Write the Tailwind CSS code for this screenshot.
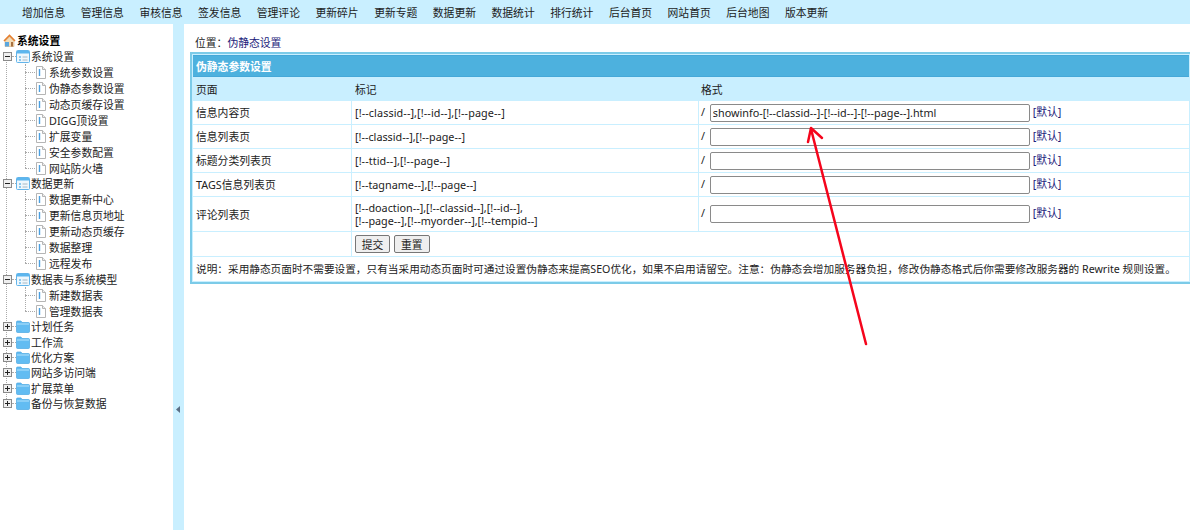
<!DOCTYPE html>
<html lang="zh-CN">
<head>
    <meta charset="UTF-8">
    <title>伪静态参数设置</title>
    <script src="https://cdn.jsdelivr.net/npm/@tailwindcss/browser@4"></script>
</head>
<body class="h-[530px] w-[1190px] overflow-hidden bg-white font-['Noto_Sans','Noto_Sans_CJK_SC',sans-serif] text-[10.8px] leading-[13px] text-[#222]">

    <!-- shared tree artwork -->
    <svg class="hidden">
        <symbol id="page" viewBox="0 0 12 13">
            <path d="M1.500.5h6l3 3v9h-9z" fill="#fff" stroke="#b5b5b5"/>
            <path d="M7.500.5v3h3" fill="#eee" stroke="#b5b5b5"/>
            <path d="M4.500 3v7" stroke="#4a9fe0" stroke-width="1.400"/>
        </symbol>
        <symbol id="win" viewBox="0 0 14 13">
            <rect x=".5" y=".5" width="13" height="12" rx="1" fill="#eef7fd" stroke="#62b4ea"/>
            <rect x="1" y="1" width="12" height="2.500" fill="#5cb6ee"/>
            <path d="M3 6h2v2H3zM3 9h2v2H3z" fill="#8cc9ee"/>
            <path d="M6.500 7h5M6.500 10h5" stroke="#a9b8c2"/>
        </symbol>
        <symbol id="folder" viewBox="0 0 14 13">
            <path d="M.5 2q0-1 1-1h3.500l1 1.500h6.500q1 0 1 1v8q0 1-1 1h-11q-1 0-1-1z" fill="#62bcf2" stroke="#4aa8e2" stroke-width=".7"/>
            <path d="M1 4h12" stroke="#b4e2fb"/>
        </symbol>
        <symbol id="minus" viewBox="0 0 9 9">
            <rect x=".5" y=".5" width="8" height="8" fill="#efefef" stroke="#8a8a8a"/>
            <path d="M2 4.500h5" stroke="#222"/>
        </symbol>
        <symbol id="plus" viewBox="0 0 9 9">
            <rect x=".5" y=".5" width="8" height="8" fill="#efefef" stroke="#8a8a8a"/>
            <path d="M2 4.500h5M4.500 2v5" stroke="#222"/>
        </symbol>
    </svg>

    <!-- top nav -->
    <nav class="flex h-6 items-center gap-[15.500px] bg-[#c9efff] pl-[22px] text-[#1c1c1c]">
        <a>增加信息</a><a>管理信息</a><a>审核信息</a><a>签发信息</a><a>管理评论</a><a>更新碎片</a><a>更新专题</a><a>数据更新</a><a>数据统计</a><a>排行统计</a><a>后台首页</a><a>网站首页</a><a>后台地图</a><a>版本更新</a>
    </nav>

    <div class="flex h-[506px]">
        <!-- left tree -->
        <aside class="w-[173px] shrink-0 pt-[9px]">
            <div class="flex h-[15px] items-center pl-[3px] font-bold text-black">
                <svg class="mr-[1px] size-[13px]" viewBox="0 0 13 13">
                    <path d="M2 7 6.500 3 11 7v5.500H2z" fill="#f3ddb8" stroke="#c9a070" stroke-width=".5"/>
                    <path d="M1 7 6.500 1.500 12 7" fill="none" stroke="#e57f2e" stroke-width="1.600"/>
                    <path d="M2 8h4v4.500H2z" fill="#5aa6de"/>
                    <path d="M8 8h2v4.500H8z" fill="#a8703f"/>
                </svg>
                系统设置
            </div>

            <div class="relative mt-[1px]">
                <!-- dotted trunk -->
                <div class="absolute top-[8px] bottom-[8px] left-[6px] border-l border-dotted border-[#aaa]"></div>

                <div class="flex h-[15px] items-center">
                    <svg class="relative ml-[3px] size-[9px]"><use href="#minus"/></svg>
                    <span class="w-[4px] border-t border-dotted border-[#aaa]"></span>
                    <svg class="h-[13px] w-[14px]"><use href="#win"/></svg>
                    <span class="ml-[1px]">系统设置</span>
                </div>
                <div class="relative pl-[25px]">
                    <div class="absolute top-0 bottom-[8px] left-[25px] border-l border-dotted border-[#aaa]"></div>
                    <div class="flex h-4 items-center"><span class="w-[10px] border-t border-dotted border-[#aaa]"></span><svg class="h-[13px] w-[12px]"><use href="#page"/></svg><span class="ml-[2px]">系统参数设置</span></div>
                    <div class="flex h-4 items-center"><span class="w-[10px] border-t border-dotted border-[#aaa]"></span><svg class="h-[13px] w-[12px]"><use href="#page"/></svg><span class="ml-[2px]">伪静态参数设置</span></div>
                    <div class="flex h-4 items-center"><span class="w-[10px] border-t border-dotted border-[#aaa]"></span><svg class="h-[13px] w-[12px]"><use href="#page"/></svg><span class="ml-[2px]">动态页缓存设置</span></div>
                    <div class="flex h-4 items-center"><span class="w-[10px] border-t border-dotted border-[#aaa]"></span><svg class="h-[13px] w-[12px]"><use href="#page"/></svg><span class="ml-[2px]">DIGG顶设置</span></div>
                    <div class="flex h-4 items-center"><span class="w-[10px] border-t border-dotted border-[#aaa]"></span><svg class="h-[13px] w-[12px]"><use href="#page"/></svg><span class="ml-[2px]">扩展变量</span></div>
                    <div class="flex h-4 items-center"><span class="w-[10px] border-t border-dotted border-[#aaa]"></span><svg class="h-[13px] w-[12px]"><use href="#page"/></svg><span class="ml-[2px]">安全参数配置</span></div>
                    <div class="flex h-4 items-center"><span class="w-[10px] border-t border-dotted border-[#aaa]"></span><svg class="h-[13px] w-[12px]"><use href="#page"/></svg><span class="ml-[2px]">网站防火墙</span></div>
                </div>

                <div class="flex h-[15px] items-center">
                    <svg class="relative ml-[3px] size-[9px]"><use href="#minus"/></svg>
                    <span class="w-[4px] border-t border-dotted border-[#aaa]"></span>
                    <svg class="h-[13px] w-[14px]"><use href="#win"/></svg>
                    <span class="ml-[1px]">数据更新</span>
                </div>
                <div class="relative pl-[25px]">
                    <div class="absolute top-0 bottom-[8px] left-[25px] border-l border-dotted border-[#aaa]"></div>
                    <div class="flex h-4 items-center"><span class="w-[10px] border-t border-dotted border-[#aaa]"></span><svg class="h-[13px] w-[12px]"><use href="#page"/></svg><span class="ml-[2px]">数据更新中心</span></div>
                    <div class="flex h-4 items-center"><span class="w-[10px] border-t border-dotted border-[#aaa]"></span><svg class="h-[13px] w-[12px]"><use href="#page"/></svg><span class="ml-[2px]">更新信息页地址</span></div>
                    <div class="flex h-4 items-center"><span class="w-[10px] border-t border-dotted border-[#aaa]"></span><svg class="h-[13px] w-[12px]"><use href="#page"/></svg><span class="ml-[2px]">更新动态页缓存</span></div>
                    <div class="flex h-4 items-center"><span class="w-[10px] border-t border-dotted border-[#aaa]"></span><svg class="h-[13px] w-[12px]"><use href="#page"/></svg><span class="ml-[2px]">数据整理</span></div>
                    <div class="flex h-4 items-center"><span class="w-[10px] border-t border-dotted border-[#aaa]"></span><svg class="h-[13px] w-[12px]"><use href="#page"/></svg><span class="ml-[2px]">远程发布</span></div>
                </div>

                <div class="flex h-4 items-center">
                    <svg class="relative ml-[3px] size-[9px]"><use href="#minus"/></svg>
                    <span class="w-[4px] border-t border-dotted border-[#aaa]"></span>
                    <svg class="h-[13px] w-[14px]"><use href="#win"/></svg>
                    <span class="ml-[1px]">数据表与系统模型</span>
                </div>
                <div class="relative pl-[25px]">
                    <div class="absolute top-0 bottom-[8px] left-[25px] border-l border-dotted border-[#aaa]"></div>
                    <div class="flex h-4 items-center"><span class="w-[10px] border-t border-dotted border-[#aaa]"></span><svg class="h-[13px] w-[12px]"><use href="#page"/></svg><span class="ml-[2px]">新建数据表</span></div>
                    <div class="flex h-4 items-center"><span class="w-[10px] border-t border-dotted border-[#aaa]"></span><svg class="h-[13px] w-[12px]"><use href="#page"/></svg><span class="ml-[2px]">管理数据表</span></div>
                </div>

                <div class="flex h-[15.400px] items-center"><svg class="relative ml-[3px] size-[9px]"><use href="#plus"/></svg><span class="w-[4px] border-t border-dotted border-[#aaa]"></span><svg class="h-[13px] w-[14px]"><use href="#folder"/></svg><span class="ml-[1px]">计划任务</span></div>
                <div class="flex h-[15.400px] items-center"><svg class="relative ml-[3px] size-[9px]"><use href="#plus"/></svg><span class="w-[4px] border-t border-dotted border-[#aaa]"></span><svg class="h-[13px] w-[14px]"><use href="#folder"/></svg><span class="ml-[1px]">工作流</span></div>
                <div class="flex h-[15.400px] items-center"><svg class="relative ml-[3px] size-[9px]"><use href="#plus"/></svg><span class="w-[4px] border-t border-dotted border-[#aaa]"></span><svg class="h-[13px] w-[14px]"><use href="#folder"/></svg><span class="ml-[1px]">优化方案</span></div>
                <div class="flex h-[15.400px] items-center"><svg class="relative ml-[3px] size-[9px]"><use href="#plus"/></svg><span class="w-[4px] border-t border-dotted border-[#aaa]"></span><svg class="h-[13px] w-[14px]"><use href="#folder"/></svg><span class="ml-[1px]">网站多访问端</span></div>
                <div class="flex h-[15.400px] items-center"><svg class="relative ml-[3px] size-[9px]"><use href="#plus"/></svg><span class="w-[4px] border-t border-dotted border-[#aaa]"></span><svg class="h-[13px] w-[14px]"><use href="#folder"/></svg><span class="ml-[1px]">扩展菜单</span></div>
                <div class="flex h-[15.400px] items-center"><svg class="relative ml-[3px] size-[9px]"><use href="#plus"/></svg><span class="w-[4px] border-t border-dotted border-[#aaa]"></span><svg class="h-[13px] w-[14px]"><use href="#folder"/></svg><span class="ml-[1px]">备份与恢复数据</span></div>
            </div>
        </aside>

        <!-- splitter -->
        <div class="w-[11px] shrink-0 bg-[#c9efff] pt-[382px]">
            <svg class="ml-[3px] h-[7px] w-[4px]" viewBox="0 0 4 7"><path d="M4 0v7L0 3.500z" fill="#5a6f86"/></svg>
        </div>

        <!-- content -->
        <main class="relative min-w-0 flex-1 pt-[12px] pl-[7px]">
            <div class="ml-[4px] h-[13px]">位置：<a class="text-[#1a1a7a]">伪静态设置</a></div>
            <div class="mt-[3px] -ml-[1px] border-y-2 border-l-2 border-[#7ccbe8]">
                <table class="w-full table-fixed border-separate border-spacing-[1px] bg-[#c9efff] text-left">
                    <colgroup><col class="w-[158px]"><col class="w-[346px]"><col></colgroup>
                    <tr>
                        <th colspan="3" class="h-[22px] border-y border-[#45a8d8] bg-[#4db1de] pl-[3px] font-bold text-white">伪静态参数设置</th>
                    </tr>
                    <tr class="h-[22px]">
                        <td class="pl-[3px]">页面</td><td class="pl-[3px]">标记</td><td class="pl-[2px]">格式</td>
                    </tr>
                    <tr class="h-[23px] bg-white">
                        <td class="pl-[3px]">信息内容页</td>
                        <td class="pl-[3px] tracking-[0.1px]">[!--classid--],[!--id--],[!--page--]</td>
                        <td class="pl-[2px]">/ <input value="showinfo-[!--classid--]-[!--id--]-[!--page--].html" class="ml-[2px] h-[18px] w-[320px] rounded-[2px] border border-[#8a8a8a] px-[2px] align-middle"> <a class="text-[#1a1a7a]">[默认]</a></td>
                    </tr>
                    <tr class="h-[23px] bg-white">
                        <td class="pl-[3px]">信息列表页</td>
                        <td class="pl-[3px]">[!--classid--],[!--page--]</td>
                        <td class="pl-[2px]">/ <input class="ml-[2px] h-[18px] w-[320px] rounded-[2px] border border-[#8a8a8a] px-[2px] align-middle"> <a class="text-[#1a1a7a]">[默认]</a></td>
                    </tr>
                    <tr class="h-[23px] bg-white">
                        <td class="pl-[3px]">标题分类列表页</td>
                        <td class="pl-[3px] tracking-[0.08px]">[!--ttid--],[!--page--]</td>
                        <td class="pl-[2px]">/ <input class="ml-[2px] h-[18px] w-[320px] rounded-[2px] border border-[#8a8a8a] px-[2px] align-middle"> <a class="text-[#1a1a7a]">[默认]</a></td>
                    </tr>
                    <tr class="h-[23px] bg-white">
                        <td class="pl-[3px]">TAGS信息列表页</td>
                        <td class="pl-[3px]">[!--tagname--],[!--page--]</td>
                        <td class="pl-[2px]">/ <input class="ml-[2px] h-[18px] w-[320px] rounded-[2px] border border-[#8a8a8a] px-[2px] align-middle"> <a class="text-[#1a1a7a]">[默认]</a></td>
                    </tr>
                    <tr class="h-[34px] bg-white">
                        <td class="pl-[3px]">评论列表页</td>
                        <td class="pl-[3px]">[!--doaction--],[!--classid--],[!--id--],<br>[!--page--],[!--myorder--],[!--tempid--]</td>
                        <td class="pl-[2px]">/ <input class="ml-[2px] h-[18px] w-[320px] rounded-[2px] border border-[#8a8a8a] px-[2px] align-middle"> <a class="text-[#1a1a7a]">[默认]</a></td>
                    </tr>
                    <tr class="h-[24px] bg-white">
                        <td></td>
                        <td colspan="2" class="pl-[3px]">
                            <button class="h-[18px] w-[35px] rounded-[2px] border border-[#777] bg-[#efefef]">提交</button>
                            <button class="ml-[1px] h-[18px] w-[36px] rounded-[2px] border border-[#777] bg-[#efefef]">重置</button>
                        </td>
                    </tr>
                    <tr class="h-[24px] bg-white">
                        <td colspan="3" class="pl-[3px] text-[10.670px] whitespace-nowrap">说明：采用静态页面时不需要设置，只有当采用动态页面时可通过设置伪静态来提高SEO优化，如果不启用请留空。注意：伪静态会增加服务器负担，修改伪静态格式后你需要修改服务器的 Rewrite 规则设置。</td>
                    </tr>
                </table>
            </div>
        </main>
    </div>

    <!-- red annotation arrow over the page -->
    <svg class="absolute top-0 left-0 h-[530px] w-[1190px]" viewBox="0 0 1190 530" fill="none" stroke="#f5051c" stroke-width="2.500" stroke-linecap="round" stroke-linejoin="round">
        <path d="M866 344 811 129"/>
        <path d="M808 142 811 128 822 138"/>
    </svg>
</body>
</html>
